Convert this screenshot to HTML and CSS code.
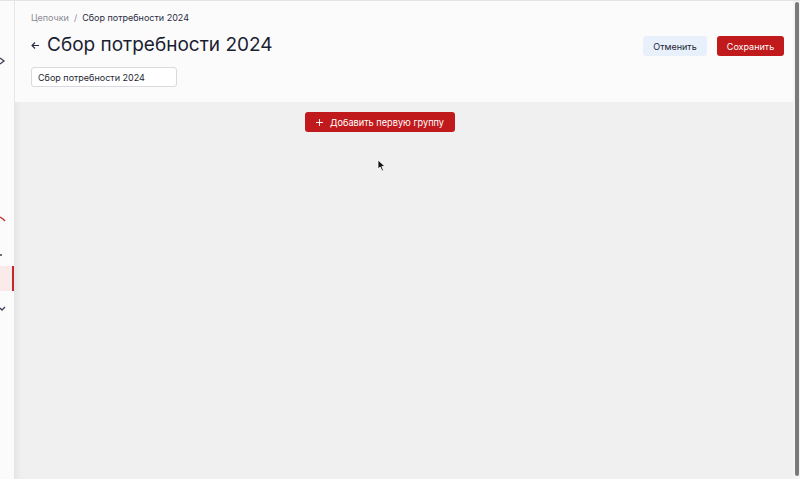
FILE: index.html
```html
<!doctype html>
<html lang="ru">
<head>
  <meta charset="UTF-8">
  <title>Сбор потребности 2024</title>
  <link rel="stylesheet" href="styles.css">
</head>
<body>
<div class="sidebar">
  <div class="side-icon side-icon-top">
    <svg width="6" height="8" viewBox="0 0 6 8"><path d="M0 1 L4 4 L0 7" fill="none" stroke="#3a3d55" stroke-width="1.3"/></svg>
  </div>
  <div class="side-icon side-icon-red">
    <svg width="6" height="6" viewBox="0 0 6 6"><path d="M0 1 L3 3 L5 5" fill="none" stroke="#c0272d" stroke-width="1.3"/></svg>
  </div>
  <div class="side-icon side-icon-dot">
    <span class="dot"></span>
  </div>
  <div class="side-item active"></div>
  <div class="side-icon side-icon-check">
    <svg width="6" height="6" viewBox="0 0 6 6"><path d="M0 2 L2 4 L5 1" fill="none" stroke="#3a3d55" stroke-width="1.3"/></svg>
  </div>
</div>

<div class="main">
  <div class="header">
    <div class="crumbs">
      <span class="crumb-link">Цепочки</span>
      <span class="crumb-sep">/</span>
      <span class="crumb-current">Сбор потребности 2024</span>
    </div>
    <div class="title-row">
      <div class="title">
        <svg class="back" width="9" height="9" viewBox="0 0 9 9"><path d="M8 4.5 H1 M4 1.5 L1 4.5 L4 7.5" fill="none" stroke="#2a2c40" stroke-width="1.1"/></svg>
        <h1>Сбор потребности 2024</h1>
      </div>
      <div class="actions">
        <button class="btn btn-light">Отменить</button>
        <button class="btn btn-red">Сохранить</button>
      </div>
    </div>
    <input class="name-input" type="text" value="Сбор потребности 2024">
  </div>

  <div class="canvas">
    <button class="btn btn-red btn-add">
      <svg width="9" height="9" viewBox="0 0 9 9"><path d="M4.5 0 V9 M0 4.5 H9" stroke="#fff" stroke-width="1.2"/></svg>
      Добавить первую группу
    </button>
  </div>
</div>

<div class="scrollbar"><div class="thumb"></div></div>

<svg class="cursor" width="9" height="13" viewBox="0 0 9 13"><path d="M1 1 L1 10 L3.2 8 L5 12 L6.5 11.3 L4.8 7.5 L8 7.5 Z" fill="#111" stroke="#fff" stroke-width="0.8"/></svg>
</body>
</html>
```

FILE: styles.css
```css
* {
  box-sizing: border-box;
}
body {
  margin: 0;
  height: 479px;
  overflow: hidden;
  display: flex;
  font-family: Inter, "Noto Sans", sans-serif;
  color: #1d1f33;
  background: #f1f0f1;
  border-top: 1px solid #e4e4e6;
}
.sidebar {
  width: 15px;
  flex: none;
  background: #fbfbfc;
  border-right: 1px solid #e6e6e8;
  display: flex;
  flex-direction: column;
}
.side-icon {
  height: 8px;
  display: flex;
  align-items: center;
}
.side-icon-top {
  margin-top: 56px;
}
.side-icon-red {
  margin-top: 150px;
}
.side-icon-dot {
  margin-top: 28px;
}
.dot {
  width: 2px;
  height: 2px;
  background: #6a6c7e;
}
.side-item {
  height: 25px;
  margin-top: 7px;
}
.side-item.active {
  background: #fbeaea;
  border-right: 2px solid #c5262c;
}
.side-icon-check {
  margin-top: 14px;
}
.main {
  flex: 1;
  display: flex;
  flex-direction: column;
  box-shadow: inset 6px 0 8px -6px rgba(0, 0, 0, 0.08);
}
.header {
  background: #fbfbfc;
  padding: 10px 9px 15px 16px;
  height: 101px;
}
.crumbs {
  font-size: 9px;
  line-height: 13px;
  display: flex;
  gap: 5px;
}
.crumb-link {
  color: #8b8b92;
}
.crumb-sep {
  color: #8b8b92;
}
.crumb-current {
  color: #2a2c40;
}
.title-row {
  display: flex;
  justify-content: space-between;
  align-items: center;
  margin-top: 7px;
  height: 28px;
}
.title {
  display: flex;
  align-items: center;
  gap: 7px;
}
.back {
  margin-top: 1px;
}
h1 {
  margin: 0;
  font-size: 19px;
  font-weight: 400;
  line-height: 28px;
  color: #1b1d31;
}
.actions {
  display: flex;
  gap: 10px;
  margin-top: 2px;
}
.btn {
  font-family: inherit;
  font-size: 9px;
  height: 20px;
  border: 0;
  border-radius: 3px;
  padding: 0;
  cursor: pointer;
  white-space: nowrap;
}
.btn-light {
  background: #e8f0fb;
  color: #1d1f33;
  width: 64px;
}
.btn-red {
  background: #c01a1c;
  color: #fff;
  width: 67px;
}
.name-input {
  margin-top: 8px;
  width: 146px;
  height: 20px;
  border: 1px solid #d9d9de;
  border-radius: 3px;
  background: #fff;
  font-family: inherit;
  font-size: 9px;
  color: #1d1f33;
  padding: 0 6px;
}
.canvas {
  flex: 1;
  padding: 10px 0 0 290px;
}
.btn-add {
  width: 150px;
  display: flex;
  align-items: center;
  gap: 7px;
  padding: 0 11px;
  font-size: 9.2px;
}
.scrollbar {
  width: 7px;
  flex: none;
  background: #f4f4f5;
  padding: 1px 1px 3px 2px;
}
.thumb {
  height: 100%;
  background: #7a7a7c;
  border-radius: 2px;
}
.cursor {
  position: absolute;
  left: 377px;
  top: 159px;
}
```
